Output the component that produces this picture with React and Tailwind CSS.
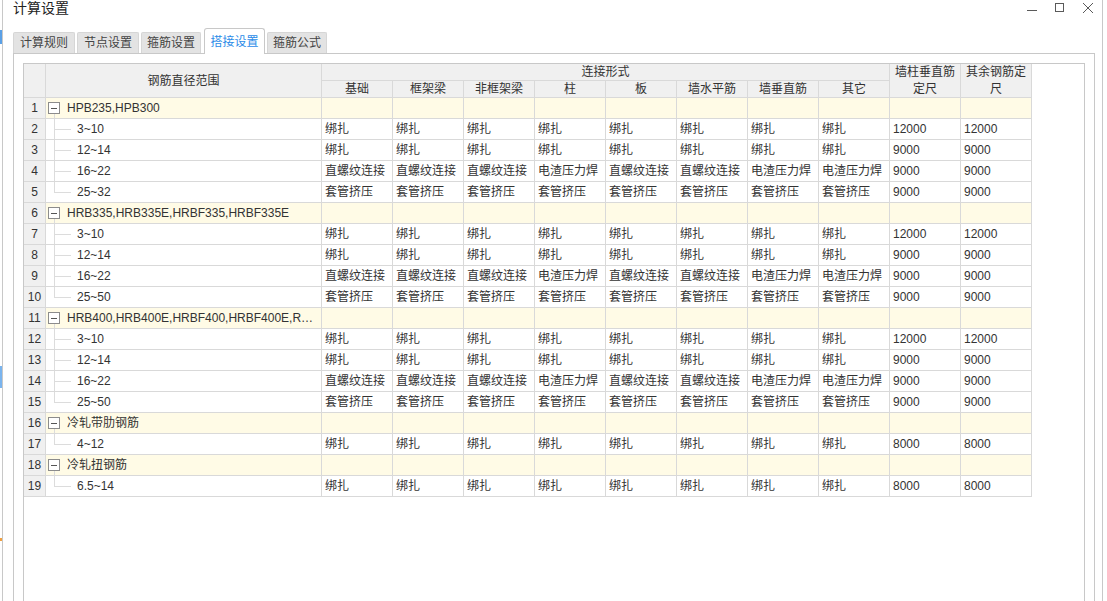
import React from 'react';

const FONT = "font-['Liberation_Sans','Noto_Sans_CJK_SC',sans-serif]";

const COLS = ['基础', '框架梁', '非框架梁', '柱', '板', '墙水平筋', '墙垂直筋', '其它'];
const BZ = Array(8).fill('绑扎');
const LJ = ['直螺纹连接', '直螺纹连接', '直螺纹连接', '电渣压力焊', '直螺纹连接', '直螺纹连接', '电渣压力焊', '电渣压力焊'];
const TG = Array(8).fill('套管挤压');

const groups = [
  {
    name: 'HPB235,HPB300',
    items: [
      ['3~10', BZ, '12000', '12000'],
      ['12~14', BZ, '9000', '9000'],
      ['16~22', LJ, '9000', '9000'],
      ['25~32', TG, '9000', '9000'],
    ],
  },
  {
    name: 'HRB335,HRB335E,HRBF335,HRBF335E',
    items: [
      ['3~10', BZ, '12000', '12000'],
      ['12~14', BZ, '9000', '9000'],
      ['16~22', LJ, '9000', '9000'],
      ['25~50', TG, '9000', '9000'],
    ],
  },
  {
    name: 'HRB400,HRB400E,HRBF400,HRBF400E,RRB400',
    items: [
      ['3~10', BZ, '12000', '12000'],
      ['12~14', BZ, '9000', '9000'],
      ['16~22', LJ, '9000', '9000'],
      ['25~50', TG, '9000', '9000'],
    ],
  },
  { name: '冷轧带肋钢筋', items: [['4~12', BZ, '8000', '8000']] },
  { name: '冷轧扭钢筋', items: [['6.5~14', BZ, '8000', '8000']] },
];

// flatten groups into numbered rows
const rows = [];
let n = 1;
groups.forEach((g) => {
  rows.push({ no: n++, group: true, name: g.name });
  g.items.forEach((it, i) => {
    rows.push({
      no: n++,
      group: false,
      last: i === g.items.length - 1,
      name: it[0],
      values: [...it[1], it[2], it[3]],
    });
  });
});

const cell = 'border-r border-b border-[#d9d9d9]';
const headCell = `${cell} bg-[#f0f0f0] flex items-center justify-center text-center leading-[16px]`;

const tabs = [
  { label: '计算规则', cls: 'w-[62px]' },
  { label: '节点设置', cls: 'w-[62px] ml-[2px]' },
  { label: '箍筋设置', cls: 'w-[60px] ml-[2px]' },
  { label: '搭接设置', cls: 'w-[61px] ml-[3px]', active: true },
  { label: '箍筋公式', cls: 'w-[60px] ml-[2px]' },
];

const NameCell = ({ row }) => {
  if (row.group) {
    return (
      <div className={`${cell} bg-[#fffbe6] flex items-stretch min-w-0`}>
        <div className="ml-[2px] w-[12px] flex flex-col items-center">
          <div className="flex-1" />
          <div className="w-[12px] h-[12px] border border-[#8c8c8c] bg-white flex items-center justify-center">
            <div className="w-[6px] h-px bg-[#555]" />
          </div>
          <div className="flex-1 w-px bg-[#dcdcdc]" />
        </div>
        <div className="ml-[7px] flex items-center min-w-0 pr-[4px]">
          <span className="truncate">{row.name}</span>
        </div>
      </div>
    );
  }
  return (
    <div className={`${cell} bg-white flex items-stretch`}>
      <div className="ml-[8px] w-[17px] flex flex-col">
        <div className="flex-1 border-l border-b border-[#dcdcdc]" />
        <div className={`flex-1 ${row.last ? '' : 'border-l border-[#dcdcdc]'}`} />
      </div>
      <div className="ml-[6px] flex items-center">{row.name}</div>
    </div>
  );
};

const WindowButtons = () => (
  <div className="flex items-start text-[#5a5a5a]">
    <svg width="12" height="14" viewBox="0 0 12 14" className="mt-[3px] mr-[16px]">
      <line x1="1" y1="7.5" x2="11" y2="7.5" stroke="currentColor" strokeWidth="1" />
    </svg>
    <svg width="11" height="11" viewBox="0 0 11 11" className="mt-[2px] mr-[17px]">
      <rect x="1.5" y="1.5" width="8" height="8" fill="none" stroke="currentColor" strokeWidth="1" />
    </svg>
    <svg width="12" height="12" viewBox="0 0 12 12" className="mt-[2px]">
      <path d="M1 1L11 11M11 1L1 11" stroke="currentColor" strokeWidth="1" />
    </svg>
  </div>
);

export default function App() {
  return (
    <div className={`w-[1107px] h-[601px] overflow-hidden bg-white flex text-[12px] text-[#333] ${FONT}`}>
      {/* sliver of the app behind the dialog */}
      <div className="w-[2px] flex flex-col">
        <div className="h-[30px]" />
        <div className="h-[14px] bg-[#5aa0e6]" />
        <div className="h-[322px]" />
        <div className="h-[22px] bg-[#7ab4ee]" />
        <div className="h-[150px]" />
        <div className="h-[3px] bg-[#f0a040]" />
      </div>

      {/* dialog window */}
      <div className="w-[1101px] h-[620px] border-l border-r border-[#c8c8c8] flex flex-col">
        {/* title bar */}
        <div className="h-[28px] flex items-start justify-between pl-[10px] pr-[8px]">
          <div className="text-[14px] leading-[16px] text-[#222]">计算设置</div>
          <WindowButtons />
        </div>

        {/* tabs */}
        <div className="h-[26px] -mb-px relative z-10 flex items-end ml-[10px]">
          {tabs.map((t) =>
            t.active ? (
              <div
                key={t.label}
                className={`${t.cls} h-[26px] bg-white border border-b-0 border-[#c8c8c8] rounded-t-[3px] flex items-center justify-center text-[#2b8be8]`}
              >
                {t.label}
              </div>
            ) : (
              <div
                key={t.label}
                className={`${t.cls} h-[21px] mb-px bg-[#e3e3e3] border border-b-0 border-[#d6d6d6] rounded-t-[2px] flex items-center justify-center text-[#444]`}
              >
                {t.label}
              </div>
            )
          )}
        </div>

        {/* tab panel */}
        <div className="flex-1 ml-[10px] mr-[7px] border border-[#c8c8c8] p-[9px] flex flex-col">
          <div className="flex-1 border border-[#c8c8c8] bg-white">
            <div className="grid grid-cols-[22px_276px_repeat(10,71px)] grid-rows-[17px_17px_repeat(19,21px)] w-max">
              {/* header */}
              <div className={`${headCell} row-span-2`} />
              <div className={`${headCell} row-span-2`}>钢筋直径范围</div>
              <div className={`${headCell} col-span-8`}>连接形式</div>
              <div className={`${headCell} row-span-2 leading-[17px]`}>墙柱垂直筋定尺</div>
              <div className={`${headCell} row-span-2 leading-[17px]`}>其余钢筋定尺</div>
              {COLS.map((c) => (
                <div key={c} className={headCell}>
                  {c}
                </div>
              ))}

              {/* body */}
              {rows.map((r) => (
                <React.Fragment key={r.no}>
                  <div className={`${cell} bg-[#f0f0f0] flex items-center justify-center`}>{r.no}</div>
                  <NameCell row={r} />
                  {r.group
                    ? Array.from({ length: 10 }).map((_, i) => (
                        <div key={i} className={`${cell} bg-[#fffbe6]`} />
                      ))
                    : r.values.map((v, i) => (
                        <div key={i} className={`${cell} bg-white flex items-center pl-[3px] whitespace-nowrap`}>
                          {v}
                        </div>
                      ))}
                </React.Fragment>
              ))}
            </div>
          </div>
        </div>
      </div>
      <div className="flex-1 bg-white" />
    </div>
  );
}
